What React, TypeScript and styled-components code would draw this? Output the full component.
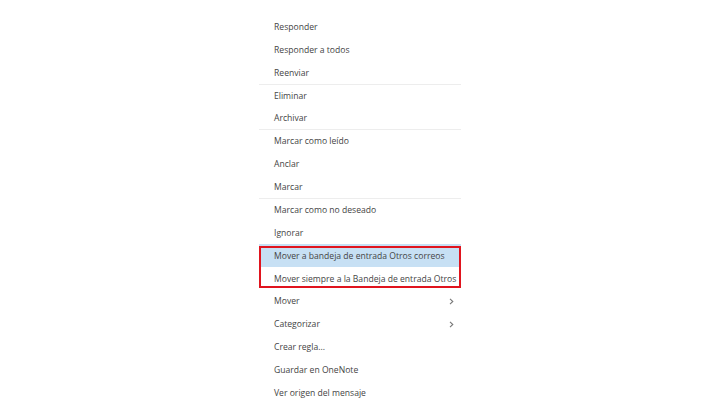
import React from "react";
import styled, { createGlobalStyle } from "styled-components";

const GlobalStyle = createGlobalStyle`
  html, body {
    margin: 0;
    padding: 0;
    background: #ffffff;
  }
  body {
    font-family: "Open Sans", "Noto Sans", "Liberation Sans", sans-serif;
  }
`;

type Entry = { label: string; sub?: boolean; sep?: boolean; selected?: boolean };

const first: Entry[] = [
  { label: "Responder" },
  { label: "Responder a todos" },
  { label: "Reenviar" },
  { label: "Eliminar", sep: true },
  { label: "Archivar" },
  { label: "Marcar como leído", sep: true },
  { label: "Anclar" },
  { label: "Marcar" },
  { label: "Marcar como no deseado", sep: true },
  { label: "Ignorar" },
];

const marked: Entry[] = [
  { label: "Mover a bandeja de entrada Otros correos", selected: true },
  { label: "Mover siempre a la Bandeja de entrada Otros" },
];

const last: Entry[] = [
  { label: "Mover", sub: true },
  { label: "Categorizar", sub: true },
  { label: "Crear regla..." },
  { label: "Guardar en OneNote" },
  { label: "Ver origen del mensaje" },
];

export default function App() {
  const row = (e: Entry) => (
    <Item key={e.label} $sep={e.sep} $selected={e.selected}>
      <span>{e.label}</span>
      {e.sub && (
        <svg width="5" height="7" viewBox="0 0 5 7">
          <polyline points="1,0.8 3.8,3.5 1,6.2" fill="none" stroke="#777" strokeWidth="1.1" />
        </svg>
      )}
    </Item>
  );

  return (
    <>
      <GlobalStyle />
      <Page>
        <Menu>
          {first.map(row)}
          <Marked>{marked.map(row)}</Marked>
          {last.map(row)}
        </Menu>
      </Page>
    </>
  );
}

const Page = styled.div`
  width: 720px;
  height: 416px;
  display: flex;
  justify-content: center;
  padding-top: 15px;
  box-sizing: border-box;
  overflow: hidden;
`;

const Menu = styled.div`
  width: 202px;
  display: flex;
  flex-direction: column;
`;

const Item = styled.div<{ $sep?: boolean; $selected?: boolean }>`
  height: 22.875px;
  flex-shrink: 0;
  box-sizing: border-box;
  padding: 0 7px 0 15px;
  display: flex;
  align-items: center;
  justify-content: space-between;
  font-size: 8.6px;
  color: #444444;
  white-space: nowrap;
  background: ${(p) => (p.$selected ? "#c7e0f4" : "transparent")};
  border-top: 1px solid ${(p) => (p.$sep ? "#ededed" : "transparent")};
`;

const Marked = styled.div`
  position: relative;
  display: flex;
  flex-direction: column;
  &::after {
    content: "";
    position: absolute;
    inset: 2px 0 2px 0;
    border: 2px solid #e0141e;
    pointer-events: none;
  }
`;
